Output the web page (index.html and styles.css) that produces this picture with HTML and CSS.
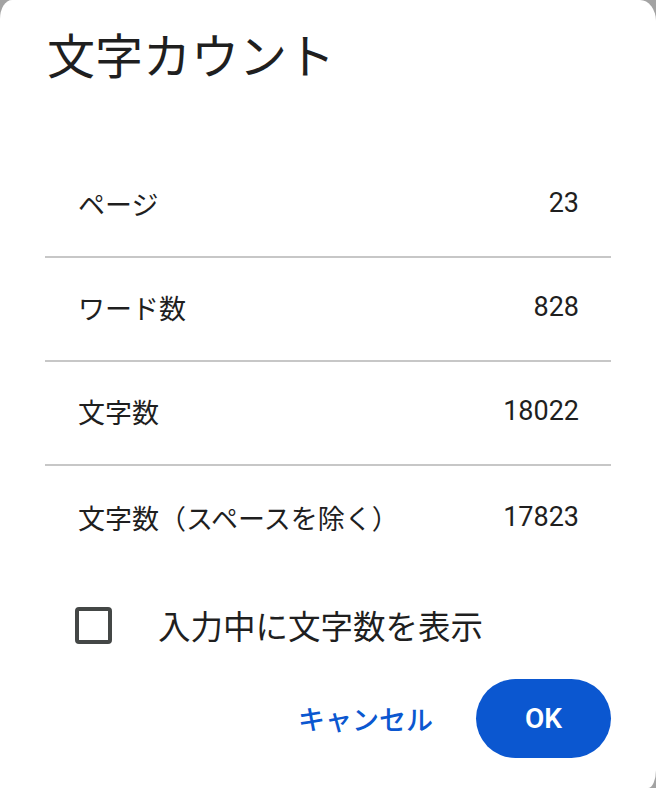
FILE: index.html
```html
<!DOCTYPE html>
<html lang="ja">
<head>
<meta charset="utf-8">
<title>文字カウント</title>
<link rel="stylesheet" href="styles.css">
</head>
<body>
<div class="dialog">
  <h1 class="title">文字カウント</h1>
  <div class="stats">
    <div class="row"><span class="label">ページ</span><span class="value">23</span></div>
    <div class="row"><span class="label">ワード数</span><span class="value">828</span></div>
    <div class="row"><span class="label">文字数</span><span class="value">18022</span></div>
    <div class="row"><span class="label">文字数（スペースを除く）</span><span class="value">17823</span></div>
  </div>
  <label class="check">
    <span class="box"></span>
    <span class="check-label">入力中に文字数を表示</span>
  </label>
  <div class="actions">
    <button class="btn-text">キャンセル</button>
    <button class="btn-ok">OK</button>
  </div>
</div>
</body>
</html>
```
FILE: styles.css
```css
html, body {
  margin: 0;
  padding: 0;
  height: 100%;
}
body {
  background: #a3a3a3;
  font-family: "Roboto", "Noto Sans CJK JP", sans-serif;
  color: #1f1f1f;
  overflow: hidden;
}
.dialog {
  box-sizing: border-box;
  width: 656px;
  height: 788px;
  background: #ffffff;
  border-top-left-radius: 12px 19px;
  border-top-right-radius: 16px 21px;
  border-bottom-right-radius: 8px 18px;
  padding: 0 45px;
  display: flex;
  flex-direction: column;
}
.title {
  margin: 0;
  padding-left: 2px;
  height: 154px;
  box-sizing: border-box;
  padding-top: 27px;
  font-size: 48px;
  line-height: 62px;
  font-weight: 400;
  color: #1f1f1f;
}
.stats {
  display: flex;
  flex-direction: column;
}
.row {
  display: flex;
  justify-content: space-between;
  align-items: center;
  height: 104px;
  padding: 0 32px 4px 33px;
  border-bottom: 2px solid #c7c7c7;
  box-sizing: border-box;
  font-size: 27px;
}
.row:last-child {
  border-bottom: none;
  height: 106px;
}
.value {
  font-family: "Roboto", sans-serif;
  font-size: 27px;
}
.check {
  display: flex;
  align-items: center;
  height: 104px;
  padding-left: 30px;
  padding-top: 2px;
  box-sizing: border-box;
}
.box {
  box-sizing: border-box;
  width: 37px;
  height: 37px;
  border: 4px solid #444746;
  border-radius: 4px;
  flex: none;
}
.check-label {
  margin-left: 46px;
  margin-bottom: 2px;
  font-size: 32.5px;
  color: #1f1f1f;
}
.actions {
  display: flex;
  justify-content: flex-end;
  align-items: center;
  gap: 43px;
  padding-top: 3px;
}
.btn-text {
  background: none;
  border: none;
  padding: 0;
  font-family: "Roboto", "Noto Sans CJK JP", sans-serif;
  font-size: 27px;
  font-weight: 500;
  color: #0b57d0;
}
.btn-ok {
  width: 135px;
  height: 79px;
  border: none;
  border-radius: 40px;
  background: #0b57d0;
  color: #ffffff;
  font-family: "Roboto", "Noto Sans", sans-serif;
  font-size: 28px;
  font-weight: 600;
}
```
